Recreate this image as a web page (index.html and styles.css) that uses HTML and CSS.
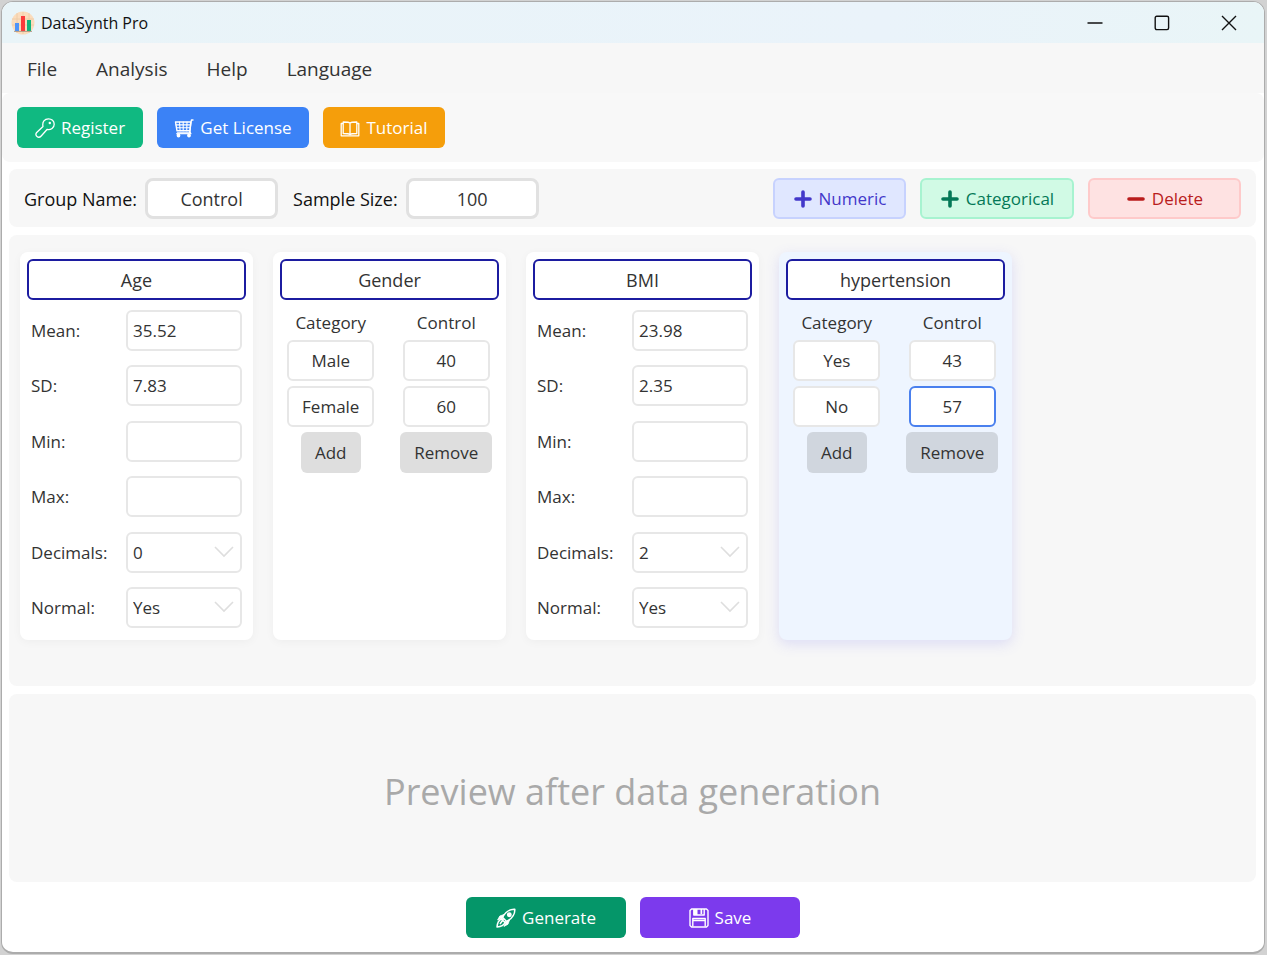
FILE: index.html
```html
<!DOCTYPE html>
<html lang="en">
<head>
    <meta charset="UTF-8">
    <meta name="viewport" content="width=device-width, initial-scale=1.0">
    <title>DataSynth Pro</title>
    <link rel="stylesheet" href="styles.css">
</head>
<body>
    <div class="window">
        <header class="titlebar">
            <svg class="app-logo" viewBox="0 0 24 24">
                <circle cx="12" cy="12" r="11.5" fill="#fbdcbc"/>
                <path d="M1 8h22M1 14h22M6 2v20M12 1v22M18 2v20" stroke="#ecc9a5" stroke-width="0.8"/>
                <rect x="4" y="12" width="4" height="8" fill="#4f94f8"/>
                <rect x="10" y="5" width="4" height="15" fill="#fb3b3b"/>
                <rect x="16" y="9" width="4" height="11" fill="#12b47c"/>
                <path d="M3 20.4h18" stroke="#a08a78" stroke-width="0.8"/>
            </svg>
            <span class="app-name">DataSynth Pro</span>
            <div class="window-controls">
                <button type="button" aria-label="Minimize">
                    <svg viewBox="0 0 16 16"><path d="M0.5 8h15"/></svg>
                </button>
                <button type="button" aria-label="Maximize">
                    <svg viewBox="0 0 16 16"><rect x="1.2" y="1.2" width="13.4" height="13.4" rx="1.5"/></svg>
                </button>
                <button type="button" aria-label="Close">
                    <svg viewBox="0 0 16 16"><path d="M1 1l14 14M15 1L1 15"/></svg>
                </button>
            </div>
        </header>

        <nav class="menubar">
            <button type="button">File</button>
            <button type="button">Analysis</button>
            <button type="button">Help</button>
            <button type="button">Language</button>
        </nav>

        <div class="toolbar">
            <button type="button" class="btn btn-register">
                <svg class="icon" viewBox="0 0 20 20" fill="none" stroke="currentColor" stroke-width="1.3" stroke-linejoin="round">
                    <path d="M8 8.500C7 4 9.600 0.800 13.500 0.800c3.200 0 5.700 2.300 5.700 5.400 0 3.800-3.300 6-7.200 5.300L6.200 18c-1.200 1.300-3 1.500-4.200 0.600-1.300-1-1.500-2.900-0.300-4.100z"/>
                    <circle cx="14.800" cy="5" r="1.200" fill="currentColor" stroke="none"/>
                </svg>
                Register
            </button>
            <button type="button" class="btn btn-license">
                <svg class="icon" viewBox="0 0 20 20" fill="none" stroke="currentColor" stroke-width="1.4" stroke-linejoin="round" stroke-linecap="round">
                    <path d="M19 2h-1.600L15.600 15H3.500"/>
                    <path d="M1.500 4h15.300l-0.900 8.800H3z"/>
                    <path d="M5.500 4l0.600 8.800M9.200 4v8.800M13 4l-0.300 8.800M1.900 6.900h14.500M2.400 9.800h13.800M15.600 13l1.400 2.700H2.500" stroke-width="1.100"/>
                    <circle cx="4.500" cy="17.500" r="1.200" fill="currentColor"/>
                    <circle cx="15" cy="17.500" r="1.200" fill="currentColor"/>
                </svg>
                Get License
            </button>
            <button type="button" class="btn btn-tutorial">
                <svg class="icon" viewBox="0 0 20 20" fill="none" stroke="currentColor" stroke-width="1.3" stroke-linejoin="round">
                    <path d="M10 5C9 4 7.500 4 3.200 4v11.500c4.300 0 5.800 0 6.800 1 1-1 2.500-1 6.800-1V4C12.500 4 11 4 10 5zM10 5v11.200"/>
                    <path d="M3.200 5.500H1.200v12.300h17.600V5.500h-2"/>
                </svg>
                Tutorial
            </button>
        </div>

        <main class="content">
            <section class="panel group-bar">
                <label for="group-name">Group Name:</label>
                <input type="text" id="group-name" class="group-input" value="Control">
                <label for="sample-size">Sample Size:</label>
                <input type="text" id="sample-size" class="group-input" value="100">
                <div class="variable-actions">
                    <button type="button" class="btn btn-numeric">
                        <svg class="icon" viewBox="0 0 20 20"><path d="M10 3v14M3 10h14" stroke="currentColor" stroke-width="3.600" stroke-linecap="round"/></svg>
                        Numeric
                    </button>
                    <button type="button" class="btn btn-categorical">
                        <svg class="icon" viewBox="0 0 20 20"><path d="M10 3v14M3 10h14" stroke="currentColor" stroke-width="3.600" stroke-linecap="round"/></svg>
                        Categorical
                    </button>
                    <button type="button" class="btn btn-delete">
                        <svg class="icon" viewBox="0 0 20 20"><path d="M3 10h14" stroke="currentColor" stroke-width="3.600" stroke-linecap="round"/></svg>
                        Delete
                    </button>
                </div>
            </section>

            <section class="panel variables">
                <article class="card">
                    <input type="text" class="card-title" aria-label="Variable name" value="Age">
                    <div class="fields">
                        <label for="age-mean">Mean:</label>
                        <input type="text" id="age-mean" class="field" value="35.52">
                        <label for="age-sd">SD:</label>
                        <input type="text" id="age-sd" class="field" value="7.83">
                        <label for="age-min">Min:</label>
                        <input type="text" id="age-min" class="field">
                        <label for="age-max">Max:</label>
                        <input type="text" id="age-max" class="field">
                        <label for="age-decimals">Decimals:</label>
                        <select id="age-decimals" class="field">
                            <option selected>0</option>
                            <option>1</option>
                            <option>2</option>
                        </select>
                        <label for="age-normal">Normal:</label>
                        <select id="age-normal" class="field">
                            <option selected>Yes</option>
                            <option>No</option>
                        </select>
                    </div>
                </article>

                <article class="card">
                    <input type="text" class="card-title" aria-label="Variable name" value="Gender">
                    <div class="categories">
                        <span class="column-name">Category</span>
                        <span class="column-name">Control</span>
                        <input type="text" class="field" aria-label="Category 1" value="Male">
                        <input type="text" class="field" aria-label="Control 1" value="40">
                        <input type="text" class="field" aria-label="Category 2" value="Female">
                        <input type="text" class="field" aria-label="Control 2" value="60">
                        <button type="button" class="btn-small">Add</button>
                        <button type="button" class="btn-small">Remove</button>
                    </div>
                </article>

                <article class="card">
                    <input type="text" class="card-title" aria-label="Variable name" value="BMI">
                    <div class="fields">
                        <label for="bmi-mean">Mean:</label>
                        <input type="text" id="bmi-mean" class="field" value="23.98">
                        <label for="bmi-sd">SD:</label>
                        <input type="text" id="bmi-sd" class="field" value="2.35">
                        <label for="bmi-min">Min:</label>
                        <input type="text" id="bmi-min" class="field">
                        <label for="bmi-max">Max:</label>
                        <input type="text" id="bmi-max" class="field">
                        <label for="bmi-decimals">Decimals:</label>
                        <select id="bmi-decimals" class="field">
                            <option>0</option>
                            <option>1</option>
                            <option selected>2</option>
                        </select>
                        <label for="bmi-normal">Normal:</label>
                        <select id="bmi-normal" class="field">
                            <option selected>Yes</option>
                            <option>No</option>
                        </select>
                    </div>
                </article>

                <article class="card selected">
                    <input type="text" class="card-title" aria-label="Variable name" value="hypertension">
                    <div class="categories">
                        <span class="column-name">Category</span>
                        <span class="column-name">Control</span>
                        <input type="text" class="field" aria-label="Category 1" value="Yes">
                        <input type="text" class="field" aria-label="Control 1" value="43">
                        <input type="text" class="field" aria-label="Category 2" value="No">
                        <input type="text" class="field active" aria-label="Control 2" value="57">
                        <button type="button" class="btn-small">Add</button>
                        <button type="button" class="btn-small">Remove</button>
                    </div>
                </article>
            </section>

            <section class="panel preview">
                <p>Preview after data generation</p>
            </section>
        </main>

        <footer class="footer">
            <button type="button" class="btn btn-generate">
                <svg class="icon" viewBox="0 0 20 20" fill="none" stroke="currentColor" stroke-width="1.500" stroke-linejoin="round">
                    <path d="M18.800 1.200c-5.300-0.300-9.300 2.800-12.300 8.100l4.200 4.200c5.300-3 8.400-7 8.100-12.300z"/>
                    <circle cx="13.300" cy="6.700" r="1.700" fill="currentColor"/>
                    <path d="M8 6.500L3.800 8 1.600 12l4.900-2.300zM13.500 12L12 16.200 8 18.400l2.300-4.900z" fill="currentColor" stroke-width="0.800"/>
                    <path d="M5.500 11c-2.600 1-4.200 4.300-4.500 8 3.700-0.300 7-1.900 8-4.500M6.500 9.300l-1 1.700 3.500 3.500 1.700-1M7.500 11L4 16"/>
                </svg>
                Generate
            </button>
            <button type="button" class="btn btn-save">
                <svg class="icon" viewBox="0 0 20 20" fill="none" stroke="currentColor" stroke-width="1.400" stroke-linejoin="round">
                    <path d="M2.500 1h15L19 2.500v15L17.500 19h-15L1 17.500v-15z"/>
                    <path d="M4.800 1v6h10.400V1M3.800 18.500v-8h12.400v8M4 12.500h12"/>
                    <path d="M5 1h3.500v6H5zM11.500 1h1.700v5h-1.700z" fill="currentColor" stroke="none"/>
                </svg>
                Save
            </button>
        </footer>
    </div>
</body>
</html>
```

FILE: styles.css
```css
* {
    box-sizing: border-box;
}

body {
    margin: 0;
    padding: 1px 2px 1px 1px;
    min-height: 100vh;
    display: flex;
    background: #d2d2d2;
    font-family: "Open Sans", "Noto Sans", sans-serif;
    font-size: 17px;
    color: #333;
}

button,
input,
select {
    font: inherit;
    color: inherit;
    margin: 0;
}

button {
    cursor: pointer;
}

.window {
    flex: 1;
    display: flex;
    flex-direction: column;
    background: #fff;
    border: 1px solid #acacac;
    border-bottom-width: 2px;
    border-radius: 12px;
    overflow: hidden;
}

/* Title bar */
.titlebar {
    display: flex;
    align-items: center;
    height: 41px;
    padding: 0 2px 0 9px;
    background: linear-gradient(90deg, #e9f4f8, #eaf3fa 70%, #e9f5f7);
    color: #111;
}

.app-logo {
    width: 24px;
    height: 24px;
}

.app-name {
    margin-left: 6px;
    font-size: 16px;
}

.window-controls {
    display: flex;
    margin-left: auto;
}

.window-controls button {
    width: 67px;
    height: 40px;
    padding: 0;
    border: none;
    background: none;
}

.window-controls svg {
    display: block;
    width: 16px;
    height: 16px;
    margin: auto;
    fill: none;
    stroke: #111;
    stroke-width: 1.4;
}

/* Menu */
.menubar {
    display: flex;
    gap: 39px;
    height: 50px;
    padding: 2px 25px 0;
    align-items: center;
    background: #f7f7f7;
}

.menubar button {
    padding: 0;
    border: none;
    background: none;
    font-size: 19px;
}

.toolbar {
    display: flex;
    gap: 14px;
    padding: 14px 15px;
    background: #f8f8f8;
    border-radius: 8px;
}

.btn {
    display: inline-flex;
    align-items: center;
    justify-content: center;
    gap: 6px;
    height: 41px;
    padding: 0 16px;
    border: none;
    border-radius: 6px;
    color: #fff;
}

.icon {
    width: 20px;
    height: 20px;
    flex: none;
}

.btn-register {
    min-width: 126px;
    background: #10b981;
}

.btn-license {
    min-width: 152px;
    background: #3b82f6;
}

.btn-tutorial {
    min-width: 122px;
    background: #f59e0b;
}

.content {
    flex: 1;
    display: flex;
    flex-direction: column;
    gap: 8px;
    padding: 7px 8px 0 7px;
}

.panel {
    background: #f7f7f7;
    border-radius: 8px;
}

/* Group settings */
.group-bar {
    display: flex;
    align-items: center;
    gap: 8px;
    padding: 9px 15px 8px;
    font-size: 18px;
    color: #111;
}

.group-input {
    width: 133px;
    height: 41px;
    margin-right: 7px;
    border: 3px solid #e1e1e1;
    border-radius: 8px;
    background: #fff;
    color: #333;
    text-align: center;
}

.variable-actions {
    display: flex;
    gap: 14px;
    margin-left: auto;
    font-size: 17px;
}

.btn-numeric {
    min-width: 133px;
    background: #e0e7ff;
    border: 2px solid #c7d2fe;
    color: #4338ca;
}

.btn-categorical {
    min-width: 154px;
    background: #d1fae5;
    border: 2px solid #a7f3d0;
    color: #047857;
}

.btn-delete {
    min-width: 153px;
    background: #fee2e2;
    border: 2px solid #fecaca;
    color: #b91c1c;
}

/* Variable cards */
.variables {
    display: flex;
    align-items: flex-start;
    gap: 20px;
    padding: 17px 11px 46px;
}

.card {
    display: flex;
    flex-direction: column;
    gap: 10px;
    width: 233px;
    height: 388px;
    padding: 7px 0 12px;
    background: #fff;
    border-radius: 8px;
    box-shadow: 0 2px 10px rgba(0, 0, 0, 0.04);
}

.card.selected {
    background: #eef5ff;
    box-shadow: 0 4px 14px rgba(99, 102, 241, 0.18);
}

.card-title {
    height: 41px;
    margin: 0 7px;
    border: 2px solid #1c1ca0;
    border-radius: 6px;
    background: #fff;
    font-size: 18px;
    text-align: center;
}

.field {
    width: 100%;
    height: 41px;
    padding: 0 5px;
    border: 2px solid #e7e7e7;
    border-radius: 6px;
    background: #fff;
}

.field.active {
    border-color: #4a80ee;
}

.fields {
    flex: 1;
    display: grid;
    grid-template-columns: 1fr 116px;
    align-content: space-between;
    align-items: center;
    padding: 0 11px;
}

select.field {
    appearance: none;
    background: #fff url("data:image/svg+xml,%3Csvg xmlns='http://www.w3.org/2000/svg' viewBox='0 0 20 12'%3E%3Cpath d='M1 1l9 9 9-9' fill='none' stroke='%23dedede' stroke-width='1.6'/%3E%3C/svg%3E") no-repeat right 6px center / 20px 12px;
}

.categories {
    display: grid;
    grid-template-columns: 1fr 1fr;
    justify-items: center;
    row-gap: 5px;
    padding-right: 2px;
}

.categories .field {
    width: 87px;
    text-align: center;
}

.column-name {
    line-height: 25px;
}

.btn-small {
    height: 41px;
    padding: 0 14px;
    border: none;
    border-radius: 6px;
    background: #dedede;
}

.selected .btn-small {
    background: #d0d6de;
}

/* Preview and actions */
.preview {
    flex: 1;
    display: flex;
    align-items: center;
    justify-content: center;
    min-height: 120px;
}

.preview p {
    margin: 0;
    padding-top: 6px;
    font-size: 36px;
    color: #a9a9a9;
}

.footer {
    display: flex;
    justify-content: center;
    gap: 14px;
    padding: 15px 14px 14px;
}

.footer .btn {
    width: 160px;
}

.btn-generate {
    background: #059669;
}

.btn-save {
    background: #7c3aed;
}
```
